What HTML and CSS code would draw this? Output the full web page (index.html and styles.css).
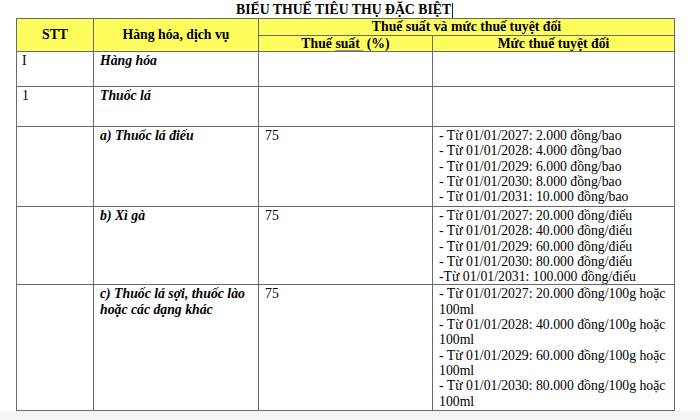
FILE: index.html
```html
<!DOCTYPE html>
<html lang="vi">
<head>
<meta charset="utf-8">
<link rel="stylesheet" href="styles.css">
</head>
<body>
<div class="page">
  <div class="title"><span class="title-text">BIỂU THUẾ TIÊU THỤ ĐẶC BIỆT</span><span class="cursor"></span></div>
  <table class="tax">
    <colgroup>
      <col class="c1"><col class="c2"><col class="c3"><col class="c4">
    </colgroup>
    <thead>
      <tr class="h1">
        <th rowspan="2">STT</th>
        <th rowspan="2">Hàng hóa, dịch vụ</th>
        <th colspan="2">Thuế suất và mức thuế tuyệt đối</th>
      </tr>
      <tr class="h2">
        <th>Thuế <span class="spell">suất&nbsp;</span> (%)</th>
        <th>Mức thuế tuyệt đối</th>
      </tr>
    </thead>
    <tbody>
      <tr class="r-i">
        <td>I</td><td class="item">Hàng hóa</td><td></td><td></td>
      </tr>
      <tr class="r-1">
        <td>1</td><td class="item">Thuốc lá</td><td></td><td></td>
      </tr>
      <tr class="r-a">
        <td></td><td class="item">a) Thuốc lá điếu</td><td>75</td>
        <td class="rates">- Từ 01/01/2027: 2.000 đồng/bao<br>- Từ 01/01/2028: 4.000 đồng/bao<br>- Từ 01/01/2029: 6.000 đồng/bao<br>- Từ 01/01/2030: 8.000 đồng/bao<br>- Từ 01/01/2031: 10.000 đồng/bao</td>
      </tr>
      <tr class="r-b">
        <td></td><td class="item">b) Xì gà</td><td>75</td>
        <td class="rates">- Từ 01/01/2027: 20.000 đồng/điếu<br>- Từ 01/01/2028: 40.000 đồng/điếu<br>- Từ 01/01/2029: 60.000 đồng/điếu<br>- Từ 01/01/2030: 80.000 đồng/điếu<br>-Từ 01/01/2031: 100.000 đồng/điếu</td>
      </tr>
      <tr class="r-c">
        <td></td><td class="item">c) Thuốc lá sợi, thuốc lào hoặc các dạng khác</td><td>75</td>
        <td class="rates">- Từ 01/01/2027: 20.000 đồng/100g hoặc 100ml<br>- Từ 01/01/2028: 40.000 đồng/100g hoặc 100ml<br>- Từ 01/01/2029: 60.000 đồng/100g hoặc 100ml<br>- Từ 01/01/2030: 80.000 đồng/100g hoặc 100ml</td>
      </tr>
    </tbody>
  </table>
</div>
</body>
</html>
```

FILE: styles.css
```css
html, body {
  margin: 0;
  padding: 0;
}
body {
  background: #f4f4f4;
  font-family: "Liberation Serif", "Times New Roman", serif;
  font-size: 13.75px;
  color: #000;
}
.page {
  background: #ffffff;
  height: 411px;
  padding-left: 16px;
  box-sizing: border-box;
  overflow: hidden;
}
.title {
  height: 18px;
  padding-left: 220px;
  display: flex;
  align-items: flex-end;
  font-weight: bold;
  line-height: 15px;
}
.title-text {
  padding-bottom: 1px;
}
.cursor {
  display: inline-block;
  width: 1px;
  height: 15px;
  background: #222;
  margin-left: 1px;
  align-self: flex-end;
}
.tax {
  border-collapse: collapse;
  table-layout: fixed;
  width: 658px;
  font-family: inherit;
  font-size: inherit;
}
.c1 { width: 77px; }
.c2 { width: 165px; }
.c3 { width: 174px; }
.c4 { width: 242px; }
.tax th, .tax td {
  border: 1px solid #6a6a6a;
  padding: 0 6px;
  line-height: 15.3px;
  vertical-align: top;
  text-align: left;
}
.tax thead th {
  background: #fdfd5e;
  text-align: center;
  vertical-align: middle;
  font-weight: bold;
  padding: 0 4px;
}
.h1 { height: 17px; }
.h2 { height: 16px; }
.h1 th, .h2 th { line-height: 14px; }
.tax tbody td:first-child { padding-left: 5px; }
.tax tbody td { padding-top: 1px; }
.item {
  font-weight: bold;
  font-style: italic;
}
.spell {
  text-decoration: underline;
  text-decoration-color: #7b8fb5;
  text-decoration-thickness: 1px;
  text-underline-offset: 2px;
}
.r-i { height: 35px; }
.r-1 { height: 40px; }
.r-a { height: 80px; }
.r-b { height: 78px; }
.r-c { height: 126px; }
.rates { padding-right: 4px; }
```
